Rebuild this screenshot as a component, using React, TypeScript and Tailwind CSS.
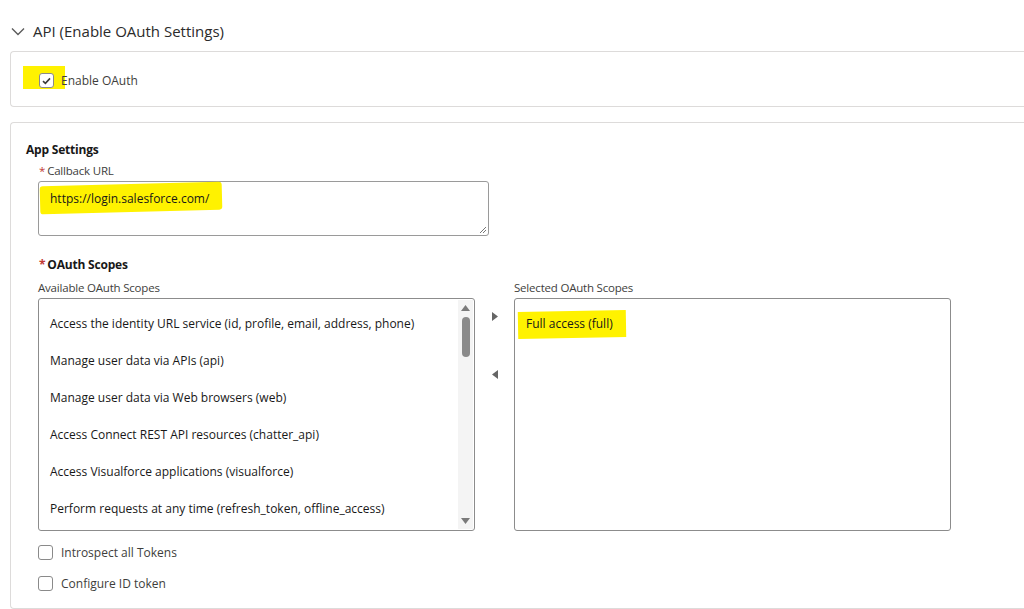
import React from "react";

const font = { fontFamily: '"Open Sans", "Noto Sans", sans-serif' };

function Check({ checked }: { checked?: boolean }) {
  return (
    <span className="flex h-[15px] w-[15px] items-center justify-center rounded-[3px] border border-[#8a8a8a] bg-white">
      {checked && (
        <svg width="9" height="8" viewBox="0 0 9 8">
          <path d="M1 4.2 L3.4 6.4 L8 1.4" fill="none" stroke="#3b3b3b" strokeWidth="1.6" />
        </svg>
      )}
    </span>
  );
}

const scopes = [
  "Access the identity URL service (id, profile, email, address, phone)",
  "Manage user data via APIs (api)",
  "Manage user data via Web browsers (web)",
  "Access Connect REST API resources (chatter_api)",
  "Access Visualforce applications (visualforce)",
  "Perform requests at any time (refresh_token, offline_access)",
];

export default function App() {
  return (
    <div className="h-[609px] w-[1024px] overflow-hidden bg-white text-[#3e3e3c]" style={font}>
      <div className="flex h-[51px] items-center pl-[11px] pt-[12px]">
        <svg width="14" height="9" viewBox="0 0 14 9">
          <path d="M1 1.5 L7 7.5 L13 1.5" fill="none" stroke="#5c5c5c" strokeWidth="1.4" />
        </svg>
        <span className="ml-[8px] text-[15px] text-[#2b2b2b]">API (Enable OAuth Settings)</span>
      </div>
      <div className="ml-[10px] flex h-[56px] items-center rounded-l-[4px] border border-r-0 border-[#dddbda] pl-[28px] pt-[3px]">
        <div className="relative flex items-center">
          <span className="absolute left-[-16px] top-[-6px] h-[23px] w-[42px] bg-[#fff200]" />
          <span className="relative flex items-center gap-[7px]">
            <Check checked />
            <span className="text-[12px] text-[#3e3e3c]">Enable OAuth</span>
          </span>
        </div>
      </div>
      <div className="ml-[10px] mt-[15px] h-[487px] rounded-l-[4px] border border-r-0 border-[#dddbda] pl-[15px] pt-[18px]">
        <div className="text-[12px] font-bold tracking-[-0.2px] text-[#181818]">App Settings</div>
        <div className="ml-[13px] mt-[3px] text-[11.5px] tracking-[-0.2px] text-[#3e3e3c]">
          <span className="mr-[2px] text-[#c23934]">*</span>Callback URL
        </div>
        <div className="relative ml-[12px] mt-[2px] h-[55px] w-[451px] rounded-[3px] border border-[#9a9a9a] bg-white">
          <span className="absolute left-[1px] top-[2px] h-[28px] w-[182px] -rotate-[1.5deg] rounded-[3px] bg-[#fff200]" />
          <span className="relative ml-[11px] mt-[8px] block text-[12px] text-[#181818]">https://login.salesforce.com/</span>
          <svg className="absolute bottom-[1px] right-[1px]" width="8" height="8" viewBox="0 0 8 8">
            <path d="M7 1 L1 7 M7 4 L4 7" stroke="#777" strokeWidth="1" />
          </svg>
        </div>
        <div className="ml-[13px] mt-[20px] text-[12px] font-bold tracking-[-0.2px] text-[#181818]">
          <span className="mr-[2px] text-[#c23934]">*</span>OAuth Scopes
        </div>
        <div className="ml-[12px] mt-[5px] flex">
          <div className="flex flex-col">
            <span className="text-[11.5px] tracking-[-0.2px] text-[#3e3e3c]">Available OAuth Scopes</span>
            <div className="relative mt-[1px] h-[233px] w-[437px] rounded-[3px] border border-[#8c8c8c] bg-white">
              <div className="flex flex-col gap-[19px] pl-[11px] pt-[16px]">
                {scopes.map((s) => (
                  <span key={s} className="h-[18px] text-[12px] leading-[18px] text-[#181818]">
                    {s}
                  </span>
                ))}
              </div>
              <div className="absolute bottom-[1px] right-[1px] top-[1px] w-[15px] bg-[#f4f4f4]">
                <svg className="absolute left-[3px] top-[5px]" width="9" height="6" viewBox="0 0 9 6">
                  <path d="M0 6 L4.5 0 L9 6 Z" fill="#7a7a7a" />
                </svg>
                <span className="absolute left-[4px] top-[17px] h-[40px] w-[8px] rounded-[4px] bg-[#8a8a8a]" />
                <svg className="absolute bottom-[5px] left-[3px]" width="9" height="6" viewBox="0 0 9 6">
                  <path d="M0 0 L4.5 6 L9 0 Z" fill="#7a7a7a" />
                </svg>
              </div>
            </div>
          </div>
          <div className="flex w-[39px] flex-col items-center pt-[33px]">
            <svg width="6" height="9" viewBox="0 0 6 9">
              <path d="M0 0 L6 4.5 L0 9 Z" fill="#666" />
            </svg>
            <svg className="mt-[49px]" width="6" height="9" viewBox="0 0 6 9">
              <path d="M6 0 L0 4.5 L6 9 Z" fill="#666" />
            </svg>
          </div>
          <div className="flex flex-col">
            <span className="text-[11.5px] tracking-[-0.2px] text-[#3e3e3c]">Selected OAuth Scopes</span>
            <div className="relative mt-[1px] h-[233px] w-[437px] rounded-[3px] border border-[#8c8c8c] bg-white">
              <span className="absolute left-[3px] top-[12px] h-[27px] w-[108px] -rotate-[1deg] bg-[#fff200]" />
              <span className="relative ml-[11px] mt-[16px] block h-[18px] text-[12px] leading-[18px] text-[#181818]">
                Full access (full)
              </span>
            </div>
          </div>
        </div>
        <div className="ml-[12px] mt-[13px] flex items-center gap-[8px]">
          <Check />
          <span className="text-[12px] text-[#3e3e3c]">Introspect all Tokens</span>
        </div>
        <div className="ml-[12px] mt-[13px] flex items-center gap-[8px]">
          <Check />
          <span className="text-[12px] text-[#3e3e3c]">Configure ID token</span>
        </div>
      </div>
    </div>
  );
}
